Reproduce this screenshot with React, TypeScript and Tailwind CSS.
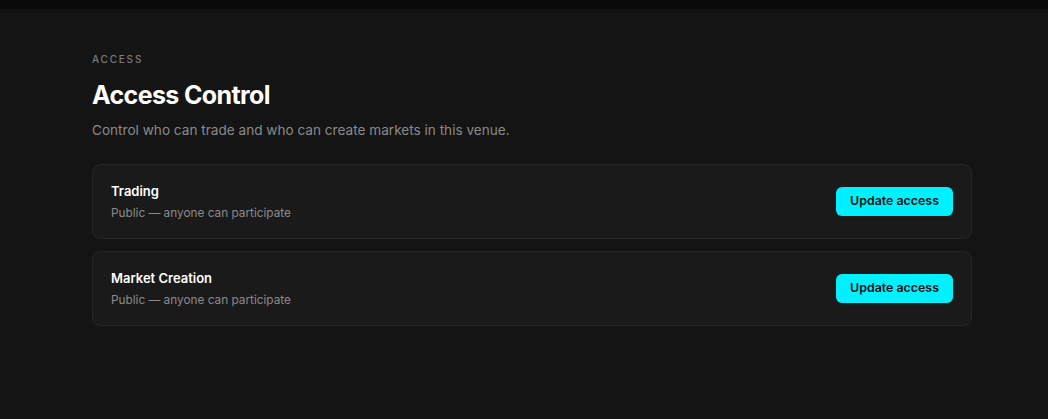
const rows = [
  { title: "Trading", desc: "Public — anyone can participate" },
  { title: "Market Creation", desc: "Public — anyone can participate" },
];

export default function App() {
  return (
    <main className="min-h-[419px] bg-[#141414] text-white" style={{ fontFamily: "Inter, 'Noto Sans', sans-serif" }}>
      <div className="h-[9px] bg-[#0a0a0a]" />
      <div className="px-[92px] pt-[44px]">
        <p className="text-[10px] font-medium tracking-[0.18em] text-[#7a7a7a] leading-[13px]">ACCESS</p>
        <h1 className="mt-[14px] text-[25px] font-bold tracking-[-0.025em] leading-[30px]">Access Control</h1>
        <p className="mt-[10px] text-[13.6px] text-[#8a8a8a] leading-[20px]">
          Control who can trade and who can create markets in this venue.
        </p>

        <div className="mt-[24px] flex w-[880px] flex-col gap-[12px]">
          {rows.map((row) => (
            <div
              key={row.title}
              className="flex h-[75px] items-center justify-between rounded-[8px] border border-[#262626] bg-[#1a1a1a] pl-[18px] pr-[18px]"
            >
              <div className="flex flex-col">
                <span className="text-[13px] font-semibold leading-[18px] text-white">{row.title}</span>
                <span className="mt-[5px] text-[11.8px] leading-[16px] text-[#8a8a8a]">{row.desc}</span>
              </div>
              <button className="h-[29px] w-[117px] rounded-[6px] bg-[#00f0ff] text-[12.4px] font-semibold text-[#111]">
                Update access
              </button>
            </div>
          ))}
        </div>
      </div>
    </main>
  );
}
